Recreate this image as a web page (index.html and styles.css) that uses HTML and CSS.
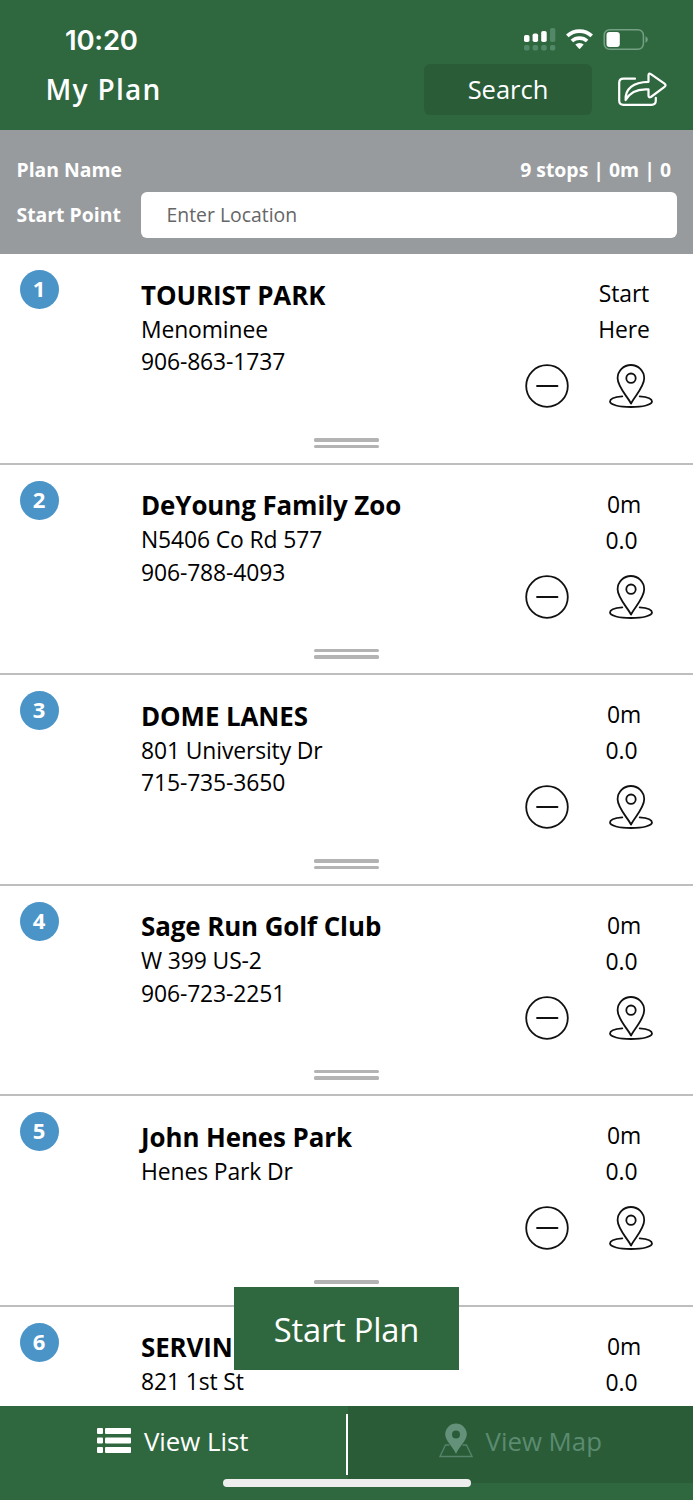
FILE: index.html
```
<!DOCTYPE html>
<html lang="en">
<head>
<meta charset="utf-8">
<title>My Plan</title>
<link rel="stylesheet" href="styles.css">
</head>
<body>
<svg class="symbols" aria-hidden="true">
  <symbol id="minus" viewBox="0 0 44 44">
    <circle cx="22" cy="22" r="20.8"/><path d="M12 22h20.500"/>
  </symbol>
  <symbol id="pin" viewBox="0 0 44 44">
    <path d="M22 39.500C18.500 32.500 8.600 23 8.600 14.300A13.300 13.300 0 0 1 35.200 14.300C35.200 23 25.500 32.500 22 39.500Z"/>
    <circle cx="22" cy="14.200" r="4.700"/>
    <path d="M13.300 32.400C6 33 1 35 1 37.600c0 3.200 9 5.400 21 5.400s21-2.200 21-5.400c0-2.600-5-4.600-12.300-5.200"/>
  </symbol>
</svg>
<div class="app">
  <header class="header">
    <div class="status">
      <span class="clock">10:20</span>
      <svg class="status-icons" viewBox="0 0 126 26" width="126" height="26">
        <g fill="#fff"><rect x="1" y="9" width="5.500" height="7" rx="1.800"/><rect x="9.600" y="7.500" width="5.500" height="8.500" rx="1.800"/><rect x="18.200" y="5" width="5.500" height="11" rx="1.800"/></g>
        <g fill="#528867"><rect x="27" y="2" width="5.300" height="14" rx="1.800"/><rect x="1" y="19" width="5.500" height="5.500" rx="1.800"/><rect x="9.600" y="19" width="5.500" height="5.500" rx="1.800"/><rect x="18.200" y="19" width="5.500" height="5.500" rx="1.800"/><rect x="27" y="19" width="5.300" height="5.500" rx="1.800"/></g>
        <g fill="none" stroke="#fff" stroke-width="3.700"><path d="M44.300 9.800a18 18 0 0 1 24.400 0"/><path d="M48.900 15a11.300 11.300 0 0 1 15.200 0"/></g>
        <path d="M52.300 18.600a6 6 0 0 1 8.400 0L57.200 22.600q-.7.700-1.400 0Z" fill="#fff"/>
        <rect x="81.200" y="3.700" width="39.200" height="19.600" rx="5.500" fill="none" stroke="#76a085" stroke-width="1.500"/>
        <path d="M122.500 10.300q2.300 1 2.300 3.200t-2.300 3.200z" fill="#76a085"/>
        <rect x="83.500" y="6" width="13.300" height="15" rx="3" fill="#fff"/>
      </svg>
    </div>
    <div class="titlebar">
      <h1 class="title">My Plan</h1>
      <button class="search">Search</button>
      <svg class="share" viewBox="0 0 50 36" width="50" height="36" fill="none" stroke="#fff" stroke-width="2.200" stroke-linecap="round" stroke-linejoin="round">
        <path d="M18 6.700H6.500Q2.200 6.700 2.200 11v17.500q0 4.300 4.300 4.300h28q4.300 0 4.300-4.300v-2.700"/>
        <path d="M8.600 28C8 17 16 10 31.500 9.800V3.500q0-2.800 2.400-1.400L47.500 11.700q2.100 1.700 0 3.200L33.900 25q-2.400 1-2.400-1.400v-6.200C20 16.500 13 20 8.600 28Z"/>
      </svg>
    </div>
  </header>

  <section class="plan">
    <div class="plan-row"><span>Plan Name</span><span class="totals">9 stops | 0m | 0</span></div>
    <div class="plan-row"><label for="start">Start Point</label><input id="start" class="location" type="text" placeholder="Enter Location"></div>
  </section>

  <main class="stops">
    <article class="stop">
      <span class="badge">1</span>
      <div class="info"><h2>TOURIST PARK</h2><p>Menominee</p><p>906-863-1737</p></div>
      <div class="side"><p>Start</p><p>Here</p><div class="actions"><svg><use href="#minus"/></svg><svg><use href="#pin"/></svg></div></div>
      <i class="handle"></i>
    </article>
    <article class="stop">
      <span class="badge">2</span>
      <div class="info"><h2>DeYoung Family Zoo</h2><p>N5406 Co Rd 577</p><p>906-788-4093</p></div>
      <div class="side"><p>0m</p><p class="dist">0.0</p><div class="actions"><svg><use href="#minus"/></svg><svg><use href="#pin"/></svg></div></div>
      <i class="handle"></i>
    </article>
    <article class="stop">
      <span class="badge">3</span>
      <div class="info"><h2>DOME LANES</h2><p>801 University Dr</p><p>715-735-3650</p></div>
      <div class="side"><p>0m</p><p class="dist">0.0</p><div class="actions"><svg><use href="#minus"/></svg><svg><use href="#pin"/></svg></div></div>
      <i class="handle"></i>
    </article>
    <article class="stop">
      <span class="badge">4</span>
      <div class="info"><h2>Sage Run Golf Club</h2><p>W 399 US-2</p><p>906-723-2251</p></div>
      <div class="side"><p>0m</p><p class="dist">0.0</p><div class="actions"><svg><use href="#minus"/></svg><svg><use href="#pin"/></svg></div></div>
      <i class="handle"></i>
    </article>
    <article class="stop">
      <span class="badge">5</span>
      <div class="info"><h2>John Henes Park</h2><p>Henes Park Dr</p></div>
      <div class="side"><p>0m</p><p class="dist">0.0</p><div class="actions"><svg><use href="#minus"/></svg><svg><use href="#pin"/></svg></div></div>
      <i class="handle"></i>
    </article>
    <article class="stop">
      <span class="badge">6</span>
      <div class="info"><h2>SERVIN</h2><p>821 1st St</p></div>
      <div class="side"><p>0m</p><p class="dist">0.0</p></div>
    </article>
  </main>

  <nav class="tabs">
    <a class="tab">
      <svg viewBox="0 0 34 25" width="34" height="25" fill="#fff"><rect width="6" height="6" rx="1"/><rect x="8" width="26" height="6" rx="1"/><rect y="9.500" width="6" height="6" rx="1"/><rect x="8" y="9.500" width="26" height="6" rx="1"/><rect y="19" width="6" height="6" rx="1"/><rect x="8" y="19" width="26" height="6" rx="1"/></svg>
      <span>View List</span>
    </a>
    <i class="divider"></i>
    <a class="tab tab-map">
      <svg viewBox="0 0 34 35" width="34" height="35" fill="#64917a"><path fill-rule="evenodd" d="M17 0.500a10.800 10.800 0 0 1 10.800 10.800C27.800 18 20 23.500 17 31 14 23.500 6.200 18 6.200 11.300A10.800 10.800 0 0 1 17 .5Zm0 7a4 4 0 1 0 0 8 4 4 0 0 0 0-8Z"/><path d="M10.500 22H6.500L1 33.500h32L27.500 22h-4" fill="none" stroke="#568369" stroke-width="1.400"/></svg>
      <span>View Map</span>
    </a>
  </nav>
  <button class="start">Start Plan</button>
  <i class="home"></i>
</div>
</body>
</html>
```
FILE: styles.css
```
* { box-sizing: border-box; margin: 0; padding: 0; }
body { background: #fff; font-family: "Open Sans", "Noto Sans", sans-serif; color: #000; }
button, input { font: inherit; border: 0; }
.symbols { position: absolute; width: 0; height: 0; }
.app { position: relative; width: 693px; height: 1500px; overflow: hidden; display: flex; flex-direction: column; }

.header { flex: none; height: 130px; background: #2f683f; color: #fff; }
.status { height: 64px; padding: 26px 44px 0 65px; display: flex; justify-content: space-between; }
.clock { font: 600 27.500px/28px Inter, sans-serif; letter-spacing: -0.200px; }
.status-icons { flex: none; }
.titlebar { display: flex; align-items: center; height: 51px; padding: 0 26px 0 45.500px; }
.title { flex: 1; font-size: 28px; font-weight: 600; letter-spacing: 1.300px; line-height: 48px; padding-bottom: 2px; }
.search { width: 168px; height: 51px; border-radius: 6px; background: #2a5c38; color: #fff; font-size: 25.500px; line-height: 48px; padding-bottom: 1px; margin-right: 25px; }
.share { flex: none; }

.plan { flex: none; height: 124px; background: #989b9e; padding: 16.500px 16px 0 16.500px; color: #fff; font-weight: 700; font-size: 19.400px; }
.plan-row { display: flex; align-items: center; justify-content: space-between; height: 45.500px; }
.totals { padding-right: 6px; }
.location { width: 536.500px; height: 45.500px; border-radius: 6px; background: #fff; padding: 0 26px; font-weight: 400; font-size: 19.400px; }
.location::placeholder { color: #666; opacity: 1; }

.stops { flex: 1; min-height: 0; overflow: hidden; }
.stop { position: relative; height: 210.500px; display: grid; grid-template-columns: 141px 1fr 168px; border-bottom: 2px solid #bebebe; font-size: 22.900px; letter-spacing: -0.120px; }
.badge { width: 39px; height: 39px; margin: 16px 0 0 19.500px; border-radius: 50%; background: #4b94c8; color: #fff; font-weight: 700; font-size: 22px; line-height: 37px; text-align: center; }
.info { padding-top: 23.600px; line-height: 32.500px; white-space: nowrap; }
.info h2 { font-size: 25.900px; line-height: 34px; padding-bottom: 2.400px; letter-spacing: -0.080px; }
.side { padding-top: 22.300px; line-height: 35.700px; }
.side p { width: 100px; margin-left: 49px; text-align: center; }
.side .dist { padding-right: 5px; }
.actions { display: flex; gap: 40px; margin: 16.400px 0 0 0.300px; }
.actions svg { width: 44px; height: 44px; fill: none; stroke: #111; stroke-width: 1.800px; stroke-linecap: round; stroke-linejoin: round; }
.handle { position: absolute; left: 314px; bottom: 14.500px; width: 65px; height: 10px; }
.handle::before, .handle::after { content: ""; display: block; height: 3.500px; border-radius: 1.500px; background: #b3b3b3; }
.handle::after { margin-top: 3px; }

.tabs { flex: none; height: 94px; background: #2f683f; display: flex; align-items: flex-start; color: #fff; font-size: 25.800px; }
.tab { flex: 1; height: 77px; display: flex; align-items: center; justify-content: center; gap: 13px; padding-bottom: 7.500px; }
.tab-map { background: #2a5c38; color: #5b8b70; }
.divider { width: 2px; height: 61px; margin-top: 8px; background: #fff; }
.start { position: absolute; left: 234px; top: 1287px; width: 225px; height: 83px; background: #2f683f; color: #fff; font-size: 32.700px; letter-spacing: -0.200px; padding-top: 1px; }
.home { position: absolute; left: 223px; top: 1479px; width: 248px; height: 8px; border-radius: 4px; background: #eee; }
```
